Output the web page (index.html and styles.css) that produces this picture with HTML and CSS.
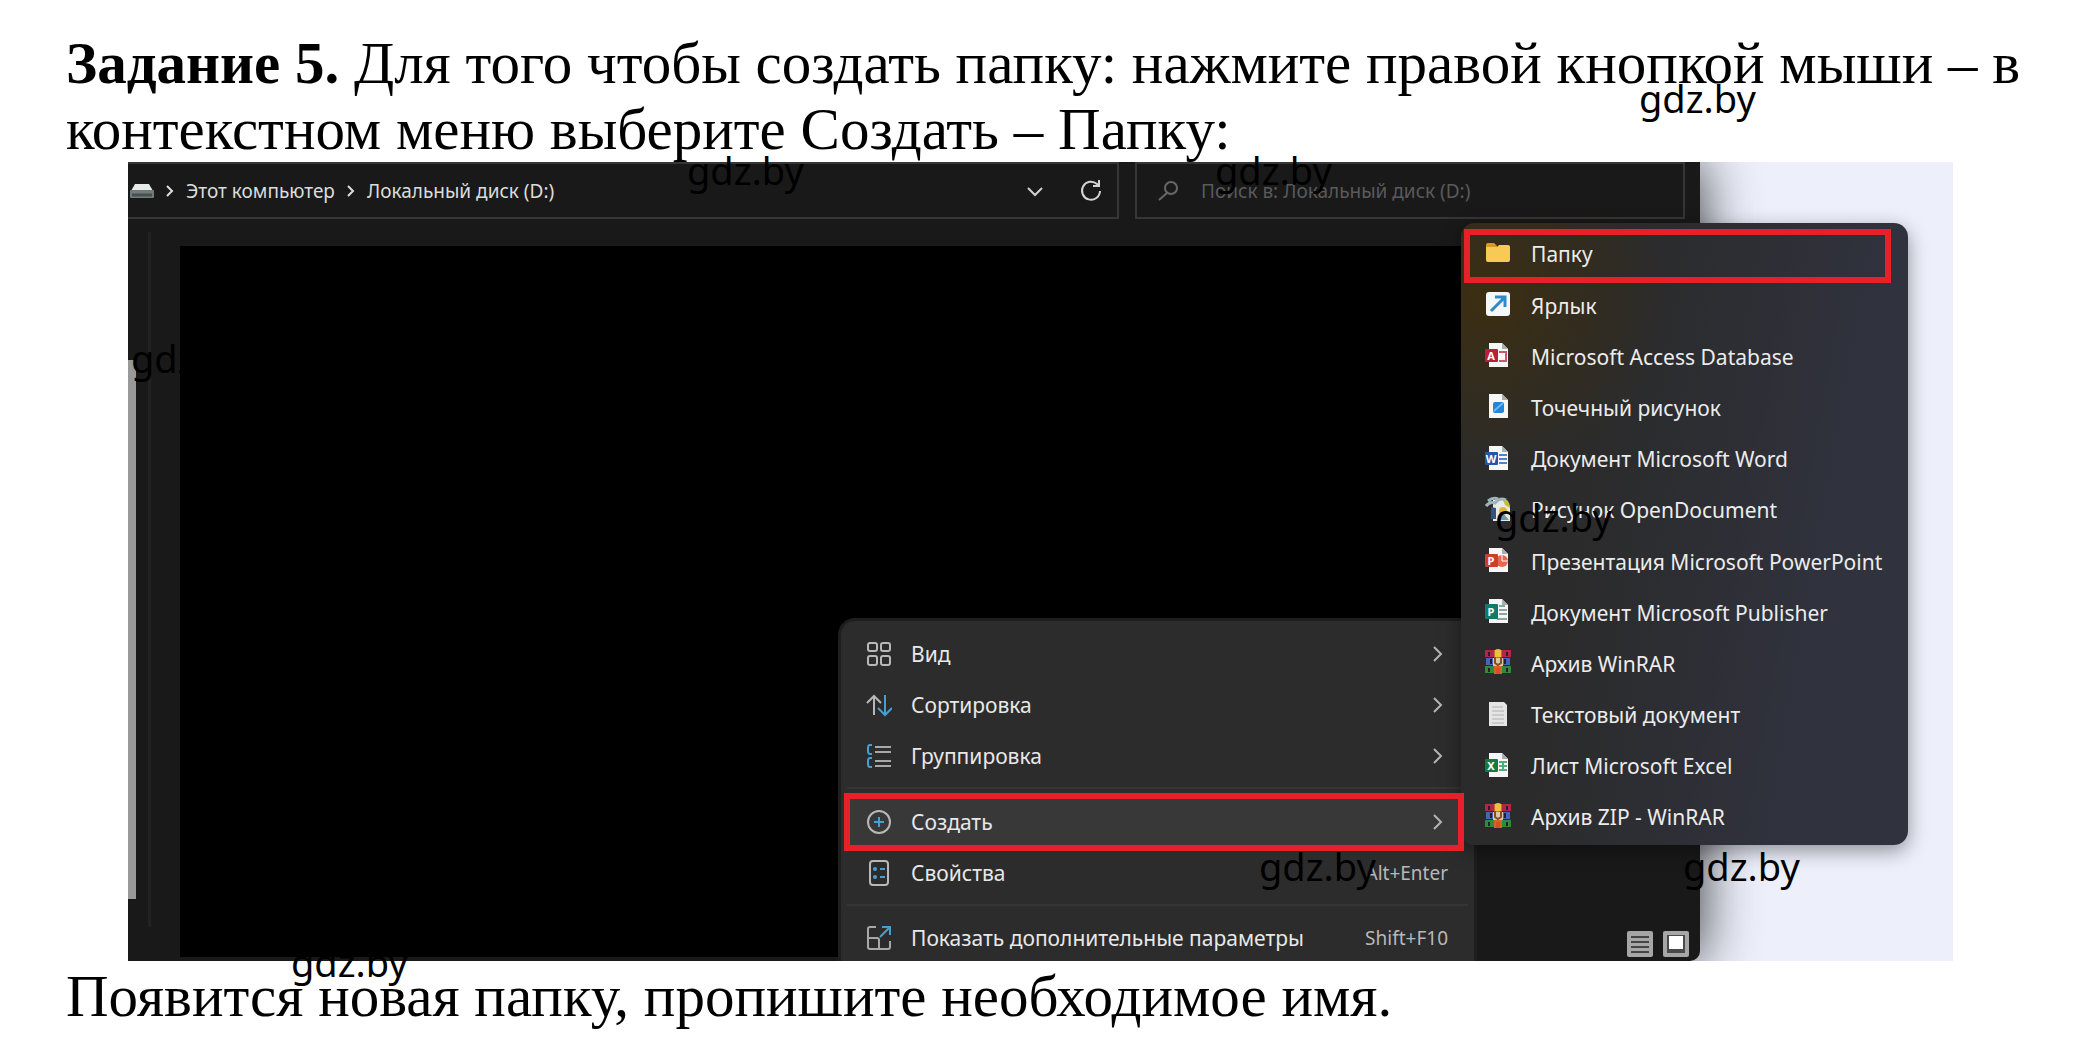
FILE: index.html
```html
<!DOCTYPE html>
<html lang="ru">
<head>
<meta charset="utf-8">
<title>Задание 5</title>
<link rel="stylesheet" href="styles.css">
</head>
<body>
<svg class="sprite" aria-hidden="true">
  <symbol id="chevron" viewBox="0 0 12 20"><path d="M2 3l7 7-7 7" fill="none" stroke="#b4b4b4" stroke-width="2"/></symbol>
  <symbol id="page" viewBox="0 0 26 26"><path d="M4 1h13l6 6v18H4z" fill="#f7f7f7"/><path d="M17 1v6h6z" fill="#a9adb0"/></symbol>
  <symbol id="winrar" viewBox="0 0 26 26">
    <path d="M0 1h26v7H0z" fill="#b32648"/><path d="M1 9h24v7H1z" fill="#4864b4"/><path d="M0 17h26v7H0z" fill="#2f8a3c"/>
    <path d="M4 3v4M6 10v5M4 19v4M22 3v4M20 10v5M22 19v4" stroke="#241f2c" stroke-width="2"/>
    <path d="M9 1h8v24H9z" fill="#c96a25"/><path d="M10 1q3-2 6 0v7h-6z" fill="#f0bd3c"/><path d="M8 9h10v8H8z" fill="#d9c8a4"/><path d="M10 8v6l3 2 3-2V8" fill="none" stroke="#8a4b22" stroke-width="2"/><path d="M11 19h4v6h-4z" fill="#d94f24"/>
  </symbol>
</svg>
<main class="document">
  <p class="task"><strong>Задание 5.</strong> Для того чтобы создать папку: нажмите правой кнопкой мыши – в<br>контекстном меню выберите Создать – Папку:</p>

  <section class="desktop">
    <div class="explorer">
      <header class="toolbar">
        <nav class="address">
          <svg class="drive" viewBox="0 0 24 16"><path d="M5 1h14l4 7H1z" fill="#e6ebea"/><rect x="0" y="7" width="24" height="8" rx="1" fill="#727b79"/><path d="M2 12h20" stroke="#46504e" stroke-width="3"/></svg>
          <svg class="crumb-arrow" viewBox="0 0 8 12"><path d="M1 1l5 5-5 5" fill="none" stroke="#ddd" stroke-width="2"/></svg>
          <a class="crumb" href="#">Этот компьютер</a>
          <svg class="crumb-arrow" viewBox="0 0 8 12"><path d="M1 1l5 5-5 5" fill="none" stroke="#ddd" stroke-width="2"/></svg>
          <a class="crumb" href="#">Локальный диск (D:)</a>
          <button class="tool tool-first" aria-label="История"><svg viewBox="0 0 24 24"><path d="M5 9l7 7 7-7" fill="none" stroke="#d0d0d0" stroke-width="2"/></svg></button>
          <button class="tool" aria-label="Обновить"><svg viewBox="0 0 24 24"><path d="M21 12a9 9 0 1 1-3-7l2 2M20 1v6h-6" fill="none" stroke="#d4d4d4" stroke-width="2"/></svg></button>
        </nav>
        <label class="search">
          <svg class="lens" viewBox="0 0 24 22"><circle cx="14" cy="8" r="6" fill="none" stroke="#686868" stroke-width="2"/><path d="M10 13l-8 7" stroke="#686868" stroke-width="2"/></svg>
          <input class="search-field" type="search" aria-label="Поиск" placeholder="Поиск в: Локальный диск (D:)">
        </label>
      </header>
      <div class="workspace">
        <div class="tree"><span class="scrollbar"></span><span class="splitter"></span></div>
        <div class="files"></div>
        <div class="gutter"></div>
      </div>
      <div class="views">
        <button class="view" aria-label="Таблица"><svg viewBox="0 0 26 26"><rect width="26" height="26" rx="2" fill="#a6a6a6"/><path d="M4 6h18M4 11h18M4 16h18M4 21h18" stroke="#454545" stroke-width="2"/></svg></button>
        <button class="view" aria-label="Крупные значки"><svg viewBox="0 0 26 26"><rect width="26" height="26" rx="2" fill="#a6a6a6"/><rect x="4" y="4" width="18" height="18" fill="#4a4a4a"/><rect x="6" y="5" width="14" height="13" fill="#fff"/></svg></button>
      </div>
    </div>

    <div class="context" role="menu">
      <button class="row" role="menuitem"><svg class="glyph" viewBox="0 0 26 26"><g fill="none" stroke="#b8b8b8" stroke-width="2"><rect x="2" y="2" width="9" height="8" rx="2"/><rect x="15" y="2" width="9" height="8" rx="2"/><rect x="2" y="15" width="9" height="9" rx="2"/><rect x="15" y="15" width="9" height="9" rx="2"/></g></svg><span>Вид</span><svg class="more"><use href="#chevron"/></svg></button>
      <button class="row" role="menuitem"><svg class="glyph" viewBox="0 0 26 26"><path d="M8 23V4M1 11l7-7 7 7" fill="none" stroke="#b8b8b8" stroke-width="2"/><path d="M19 3v20M12 16l7 7 7-7" fill="none" stroke="#469fd2" stroke-width="2"/></svg><span>Сортировка</span><svg class="more"><use href="#chevron"/></svg></button>
      <button class="row" role="menuitem"><svg class="glyph" viewBox="0 0 26 26"><path d="M9 4h16M9 9h16M9 18h16M9 23h16" stroke="#a8a8a8" stroke-width="2"/><path d="M6 2H4Q2 2 2 5v3q0 3 2 3h2M6 15H4q-2 0-2 3v3q0 3 2 3h2" fill="none" stroke="#469fd2" stroke-width="2"/></svg><span>Группировка</span><svg class="more"><use href="#chevron"/></svg></button>
      <hr class="rule">
      <button class="row row-create" role="menuitem"><svg class="glyph" viewBox="0 0 26 26"><circle cx="13" cy="13" r="11" fill="none" stroke="#b8b8b8" stroke-width="2"/><path d="M13 8v10M8 13h10" stroke="#469fd2" stroke-width="2"/></svg><span>Создать</span><svg class="more"><use href="#chevron"/></svg></button>
      <button class="row" role="menuitem"><svg class="glyph" viewBox="0 0 26 26"><rect x="4" y="1" width="18" height="24" rx="3" fill="none" stroke="#b8b8b8" stroke-width="2"/><path d="M14 9h5M14 17h5" stroke="#469fd2" stroke-width="2"/><circle cx="9" cy="9" r="2" fill="#469fd2"/><circle cx="9" cy="17" r="2" fill="#469fd2"/></svg><span>Свойства</span><kbd class="hotkey">Alt+Enter</kbd></button>
      <hr class="rule">
      <button class="row" role="menuitem"><svg class="glyph" viewBox="0 0 26 26"><path d="M10 2H4Q2 2 2 4v18q0 2 2 2h18q2 0 2-2v-6M2 13h9q2 0 2 2v9" fill="none" stroke="#a8a8a8" stroke-width="2"/><path d="M14 12L24 2M16 2h8v8" fill="none" stroke="#469fd2" stroke-width="2"/></svg><span>Показать дополнительные параметры</span><kbd class="hotkey">Shift+F10</kbd></button>
    </div>

    <div class="submenu" role="menu">
      <button class="item item-marked" role="menuitem"><svg class="icon" viewBox="0 0 26 26"><path d="M1 5q0-2 2-2h6l3 3v5H1z" fill="#d99a24"/><path d="M1 7h11l2-2h9q2 0 2 2v13q0 2-2 2H3q-2 0-2-2z" fill="#f6cb53"/></svg>Папку</button>
      <button class="item" role="menuitem"><svg class="icon" viewBox="0 0 26 26"><rect x="1" y="1" width="24" height="24" rx="3" fill="#f4f8fb"/><path d="M6 20L19 7M10 6h10v10" fill="none" stroke="#2e8acb" stroke-width="3"/></svg>Ярлык</button>
      <button class="item" role="menuitem"><svg class="icon" viewBox="0 0 26 26"><use href="#page"/><path d="M14 10h7v9h-7" fill="none" stroke="#d2566b" stroke-width="2"/><rect y="7" width="13" height="13" rx="1" fill="#b91f3c"/><text class="letter" x="6" y="18">A</text></svg>Microsoft Access Database</button>
      <button class="item" role="menuitem"><svg class="icon" viewBox="0 0 26 26"><use href="#page"/><rect x="8" y="9" width="11" height="11" rx="2" fill="#2583d8"/><path d="M9 18l9-8" stroke="#66b9f4" stroke-width="2"/></svg>Точечный рисунок</button>
      <button class="item" role="menuitem"><svg class="icon" viewBox="0 0 26 26"><use href="#page"/><path d="M14 10h8M14 14h8M14 18h8" stroke="#4f83cf" stroke-width="2"/><rect y="7" width="13" height="13" rx="1" fill="#2456ae"/><text class="letter" x="6" y="18">W</text></svg>Документ Microsoft Word</button>
      <button class="item" role="menuitem"><svg class="icon" viewBox="0 0 26 26"><path d="M8 4h11l6 6v15H8z" fill="#e6ebe9"/><path d="M17 2q8 1 8 10l-5-3z" fill="#c7bd36"/><path d="M1 10q4-5 9-3 5-6 11-3M3 5q5-4 10-2" fill="none" stroke="#9fb4ba" stroke-width="3"/><path d="M6 11v12h5V12z" fill="#36537c"/><circle cx="18" cy="15" r="4" fill="#e1b43d"/><path d="M12 24l6-7 6 7z" fill="#6e9aa9"/></svg>Рисунок OpenDocument</button>
      <button class="item" role="menuitem"><svg class="icon" viewBox="0 0 26 26"><use href="#page"/><circle cx="17" cy="14" r="6" fill="#e9684d"/><path d="M17 14V8M17 14h6" stroke="#fff"/><rect y="7" width="13" height="13" rx="1" fill="#c9412a"/><text class="letter" x="6" y="18">P</text></svg>Презентация Microsoft PowerPoint</button>
      <button class="item" role="menuitem"><svg class="icon" viewBox="0 0 26 26"><use href="#page"/><path d="M14 8h6M14 12h8M14 16h8M12 21h10" stroke="#8ca5a0" stroke-width="2"/><rect y="6" width="13" height="15" rx="1" fill="#107b68"/><text class="letter" x="6" y="18">P</text></svg>Документ Microsoft Publisher</button>
      <button class="item" role="menuitem"><svg class="icon"><use href="#winrar"/></svg>Архив WinRAR</button>
      <button class="item" role="menuitem"><svg class="icon" viewBox="0 0 26 26"><path d="M4 1h15l3 3v21H4z" fill="#e5e5e5"/><path d="M7 6h11M7 10h12M7 14h12M7 18h12M7 22h12" stroke="#b0b0b0"/></svg>Текстовый документ</button>
      <button class="item" role="menuitem"><svg class="icon" viewBox="0 0 26 26"><use href="#page"/><path d="M14 10h8M14 14h8M14 18h8M18 9v10" stroke="#4fae7c" stroke-width="2"/><rect y="7" width="13" height="13" rx="1" fill="#157b45"/><text class="letter" x="6" y="18">X</text></svg>Лист Microsoft Excel</button>
      <button class="item" role="menuitem"><svg class="icon"><use href="#winrar"/></svg>Архив ZIP - WinRAR</button>
    </div>
  </section>

  <p class="task task-end">Появится новая папку, пропишите необходимое имя.</p>

  <span class="mark mark-1">gdz.by</span>
  <span class="mark mark-2">gdz.by</span>
  <span class="mark mark-3">gdz.by</span>
  <span class="mark mark-4">gdz.by</span>
  <span class="mark mark-5">gdz.by</span>
  <span class="mark mark-6">gdz.by</span>
  <span class="mark mark-7">gdz.by</span>
  <span class="mark mark-8">gdz.by</span>
</main>
</body>
</html>
```
FILE: styles.css
```css
* { box-sizing: border-box; }

body {
  margin: 0;
  background: #fff;
  color: #000;
  font-family: "Noto Sans", sans-serif;
}

.sprite { position: absolute; width: 0; height: 0; }

button {
  margin: 0;
  padding: 0;
  border: 0;
  background: none;
  color: inherit;
  font: inherit;
  text-align: left;
}

.document {
  position: relative;
  padding: 30px 60px 24px 66px;
}

.task {
  margin: 0;
  font-family: "Liberation Serif", serif;
  font-size: 59px;
  line-height: 66px;
  white-space: nowrap;
}

.task-end { margin-top: 2px; }

/* Desktop behind the explorer window */
.desktop {
  position: relative;
  display: flex;
  height: 799px;
  margin: 0 60px 0 62px;
  padding-right: 253px;
  overflow: hidden;
  background: #edf0fb;
}

.explorer {
  position: relative;
  display: flex;
  flex: 1;
  flex-direction: column;
  border-radius: 0 0 10px 0;
  background: #191919;
  box-shadow: 0 0 56px rgba(0, 0, 0, 0.8);
}

.toolbar {
  display: flex;
  gap: 16px;
  height: 57px;
  padding-right: 15px;
}

.address {
  display: flex;
  flex: 1;
  align-items: center;
  padding: 0 14px 0 2px;
  border: 2px solid #363636;
  border-left: 0;
}

.drive { width: 24px; height: 16px; }
.crumb-arrow { width: 8px; height: 12px; margin: 0 12px; }

.crumb {
  color: #dcdcdc;
  font-size: 19px;
  line-height: 26px;
  text-decoration: none;
  white-space: nowrap;
}

.tool { width: 24px; height: 24px; margin-left: 32px; }
.tool svg { display: block; width: 24px; height: 24px; }
.tool-first { margin-left: auto; }

.search {
  display: flex;
  flex: 0 0 550px;
  align-items: center;
  gap: 20px;
  padding: 0 20px;
  border: 2px solid #363636;
}

.lens { width: 24px; height: 22px; }

.search-field {
  flex: 1;
  min-width: 0;
  padding: 0;
  border: 0;
  outline: 0;
  background: none;
  color: #dcdcdc;
  font: 19px/26px "Noto Sans", sans-serif;
}

.search-field::placeholder { color: #5a5a5a; opacity: 1; }

.workspace {
  display: flex;
  flex: 1;
  padding: 27px 0 4px;
}

.tree {
  display: flex;
  flex: 0 0 52px;
  gap: 12px;
  margin-top: -14px;
  padding-bottom: 30px;
}

.scrollbar { width: 8px; margin: 128px 0 28px; background: #999; }
.splitter { width: 3px; background: #222; }
.files { flex: 1; background: #000; }
.gutter { flex: 0 0 239px; }

.views {
  position: absolute;
  right: 11px;
  bottom: 4px;
  display: flex;
  gap: 10px;
}

.view,
.view svg { display: block; width: 26px; height: 26px; }

/* Context menu */
.context {
  position: absolute;
  top: 459px;
  right: 479px;
  bottom: 0;
  width: 633px;
  padding: 7px 0 0;
  border-radius: 14px 0 0 0;
  background: #2c2c2c;
  box-shadow: 0 0 0 3px #1e1e1e;
  color: #e8e8e8;
}

.row {
  display: flex;
  align-items: center;
  width: 100%;
  height: 51px;
  padding: 0 26px 0 25px;
  font-size: 21px;
  line-height: 28px;
  white-space: nowrap;
}

.glyph { width: 26px; height: 26px; margin-right: 19px; }
.more { width: 12px; height: 20px; margin: 0 4px 0 auto; }

.rule {
  height: 2px;
  margin: 6px;
  border: 0;
  background: #353535;
}

/* The frame is drawn over the edge of the submenu */
.row-create {
  position: relative;
  z-index: 1;
  width: 620px;
  height: 58px;
  margin: -2px 0 -4px 3px;
  padding: 0 10px 0 16px;
  border: 6px solid #e8202a;
  background: #383838;
}

.hotkey {
  margin-left: auto;
  color: #b8b8b8;
  font: 19px/28px "Noto Sans", sans-serif;
}

/* Submenu with the file types */
.submenu {
  position: absolute;
  top: 61px;
  right: 45px;
  display: flex;
  flex-direction: column;
  width: 447px;
  height: 622px;
  padding: 6px 17px 2px 3px;
  border-radius: 14px;
  background:
    radial-gradient(circle at 6% 12%, rgba(70, 48, 0, 0.6), rgba(70, 48, 0, 0) 180px),
    linear-gradient(100deg, #2b2b2b 30%, #30323e 80%);
  box-shadow: 0 6px 20px rgba(0, 0, 0, 0.4);
  color: #ececec;
}

.item {
  display: flex;
  flex: 1;
  align-items: center;
  padding-left: 21px;
  font-size: 21px;
  line-height: 28px;
  white-space: nowrap;
}

.item-marked {
  flex: 0 0 54px;
  margin-bottom: -3px;
  padding: 0 0 4px 15px;
  border: 6px solid #e8202a;
}

.icon { width: 26px; height: 26px; margin: 0 20px 3px 0; }

.letter {
  fill: #fff;
  font: bold 11px "Noto Sans", sans-serif;
  text-anchor: middle;
}

/* Watermarks */
.mark {
  position: absolute;
  font-size: 38px;
  line-height: 38px;
  pointer-events: none;
}

.mark-1 { top: 79px; left: 1639px; }
.mark-2 { top: 151px; left: 687px; }
.mark-3 { top: 151px; left: 1215px; }
.mark-4 { top: 339px; left: 131px; }
.mark-5 { top: 498px; left: 1495px; }
.mark-6 { top: 847px; left: 1259px; }
.mark-7 { top: 847px; left: 1683px; }
.mark-8 { top: 943px; left: 291px; }
```
